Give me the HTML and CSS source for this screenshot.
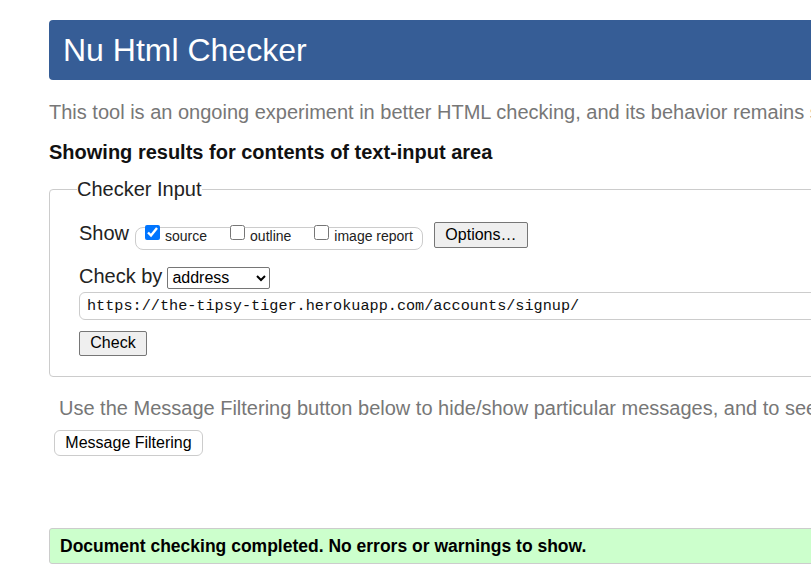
FILE: index.html
```html
<!DOCTYPE html>
<html lang="en">
<head>
<meta charset="utf-8">
<title>Nu Html Checker</title>
<link rel="stylesheet" href="styles.css">
</head>
<body>
<div class="page">
  <h1 class="header">Nu Html Checker</h1>
  <p class="intro">This tool is an ongoing experiment in better HTML checking, and its behavior remains subject to change</p>
  <p class="heading">Showing results for contents of text-input area</p>
  <fieldset class="checker">
    <legend class="legend">Checker Input</legend>
    <div class="row show-row">
      <span class="label">Show</span>
      <span class="group">
        <input type="checkbox" class="cb" checked><span class="opt">source</span>
        <input type="checkbox" class="cb gap"><span class="opt">outline</span>
        <input type="checkbox" class="cb gap"><span class="opt">image report</span>
      </span>
      <button class="btn options">Options…</button>
    </div>
    <div class="row by-row">
      <span class="label">Check by</span>
      <select class="sel"><option>address</option></select>
    </div>
    <input class="url" type="text" value="https://the-tipsy-tiger.herokuapp.com/accounts/signup/">
    <button class="btn check">Check</button>
  </fieldset>
  <p class="filter-note">Use the Message Filtering button below to hide/show particular messages, and to see total counts of errors and warnings.</p>
  <button class="filter-btn">Message Filtering</button>
  <div class="success">Document checking completed. No errors or warnings to show.</div>
</div>
</body>
</html>
```
FILE: styles.css
```css
html { overflow: hidden; }
body {
  margin: 0;
  font-family: "Liberation Sans", Arial, sans-serif;
  color: #222;
}
.page {
  width: 1100px;
  padding: 20px 0 0 49px;
}
.header {
  margin: 0;
  height: 60px;
  line-height: 60px;
  padding-left: 14px;
  background: #365d96;
  color: #fff;
  font-size: 32px;
  font-weight: normal;
  border-radius: 4px;
}
.intro {
  margin: 20px 0 0;
  font-size: 20px;
  line-height: 24px;
  color: #777;
  white-space: nowrap;
}
.heading {
  margin: 16px 0 0;
  font-size: 20px;
  line-height: 24px;
  font-weight: bold;
  color: #111;
}
.checker {
  margin: 13px 0 0;
  padding: 0 0 20px 29px;
  border: 1px solid #ccc;
  border-radius: 4px;
  min-width: 0;
}
.legend {
  margin-left: -2px;
  padding: 0;
  font-size: 20px;
  line-height: 24px;
}
.row {
  display: flex;
  align-items: baseline;
}
.show-row { margin-top: 20px; }
.label {
  font-size: 20px;
  line-height: 24px;
}
.group {
  display: flex;
  align-items: flex-start;
  height: 21px;
  margin-left: 6px;
  padding: 0 9px 0 9px;
  border: 1px solid #ccc;
  border-radius: 8px;
}
.cb {
  width: 15px;
  height: 15px;
  margin: -3px 5px 0 0;
  accent-color: #0075ff;
}
.cb.gap { margin-left: 23px; }
.opt {
  font-size: 14px;
  line-height: 16px;
  margin-top: 0;
}
.btn {
  font-family: "Liberation Sans", Arial, sans-serif;
  font-size: 16px;
  color: #000;
  background: #efefef;
  border: 1px solid #767676;
  border-radius: 2px;
  padding: 0 10px;
  height: 26px;
}
.options { margin-left: 11px; width: 94px; }
.by-row { margin-top: 14px; }
.sel {
  margin-left: 5px;
  width: 103px;
  height: 22px;
  font-family: "Liberation Sans", Arial, sans-serif;
  font-size: 16px;
  border: 1px solid #767676;
  border-radius: 2px;
  background: #fff;
  color: #000;
}
.url {
  display: block;
  box-sizing: border-box;
  width: 1000px;
  height: 28px;
  margin: 3px 0 0;
  padding: 0 7px;
  border: 1px solid #ccc;
  border-radius: 6px;
  font-family: "Liberation Mono", monospace;
  font-size: 15.2px;
  color: #111;
  background: #fff;
}
.check {
  display: block;
  margin-top: 11px;
  width: 68px;
  height: 25px;
}
.filter-note {
  margin: 19px 0 0 10px;
  font-size: 20px;
  line-height: 24px;
  color: #777;
  white-space: nowrap;
}
.filter-btn {
  display: block;
  margin: 10px 0 0 5px;
  width: 149px;
  height: 26px;
  padding: 0;
  font-family: "Liberation Sans", Arial, sans-serif;
  font-size: 16px;
  color: #000;
  background: #fff;
  border: 1px solid #ccc;
  border-radius: 6px;
}
.success {
  margin-top: 72px;
  height: 34px;
  line-height: 34px;
  padding-left: 10px;
  background: #ccffcc;
  border: 1px solid #ccc;
  border-radius: 3px;
  font-size: 17.5px;
  font-weight: bold;
  color: #000;
}
```
